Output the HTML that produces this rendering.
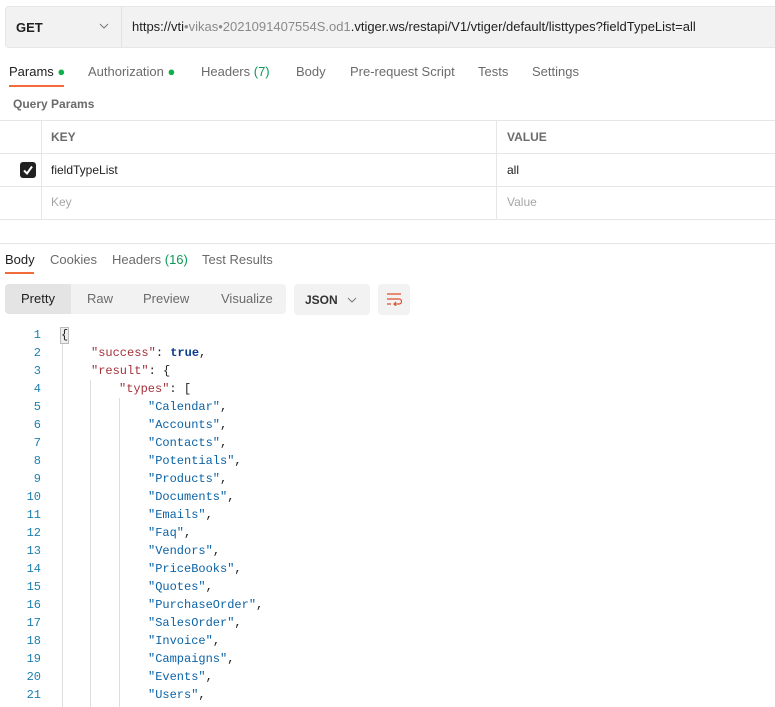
<!DOCTYPE html>
<html><head><style>
body{margin:0;width:775px;height:707px;overflow:hidden;background:#fff;font-family:"Liberation Sans",sans-serif;font-size:13px;color:#212121;position:relative}
.a{position:absolute;white-space:nowrap}
.mono{font-family:"Liberation Mono",monospace;font-size:12px}
.hl{position:absolute;height:1px;background:#e6e6e6}
.vl{position:absolute;width:1px;background:#e6e6e6}
.ln{position:absolute;width:30px;text-align:right;color:#1c7fb0;font-family:"Liberation Mono",monospace;font-size:12px}
.str{color:#0b63a6}
.k{color:#a3323b}
</style></head><body>
<div class="a" style="left:5px;top:6px;width:775px;height:40px;background:#f2f2f2;border:1px solid #e6e6e6;border-radius:4px"></div>
<div class="vl" style="left:121px;top:7px;height:40px;background:#e2e2e2"></div>
<div class="a" style="left:16px;top:20px;font-weight:bold;font-size:13px">GET</div>
<svg class="a" style="left:99px;top:23px" width="10" height="6"><path d="M1 1l4 4 4-4" stroke="#777" fill="none"/></svg>
<div class="a" style="left:132px;top:19px;font-size:13px">https://vti<span style="color:#8a8a8a">•vikas•2021091407554S.od1</span>.vtiger.ws/restapi/V1/vtiger/default/listtypes?fieldTypeList=all</div>

<div class="a" style="left:9px;top:64px">Params <span style="color:#0cb04a">●</span></div>
<div class="a" style="left:9px;top:85px;width:55px;height:2px;background:#f26b3a"></div>
<div class="a" style="left:88px;top:64px;color:#6b6b6b">Authorization <span style="color:#0cb04a">●</span></div>
<div class="a" style="left:201px;top:64px;color:#6b6b6b">Headers <span style="color:#0a9a55">(7)</span></div>
<div class="a" style="left:296px;top:64px;color:#6b6b6b">Body</div>
<div class="a" style="left:350px;top:64px;color:#6b6b6b">Pre-request Script</div>
<div class="a" style="left:478px;top:64px;color:#6b6b6b">Tests</div>
<div class="a" style="left:532px;top:64px;color:#6b6b6b">Settings</div>
<div class="a" style="left:13px;top:97px;font-size:12px;font-weight:bold;color:#6b6b6b">Query Params</div>

<div class="hl" style="left:0;top:120px;width:775px"></div>
<div class="hl" style="left:0;top:153px;width:775px"></div>
<div class="hl" style="left:0;top:186px;width:775px"></div>
<div class="hl" style="left:0;top:219px;width:775px"></div>
<div class="vl" style="left:41px;top:120px;height:100px"></div>
<div class="vl" style="left:496px;top:120px;height:100px"></div>
<div class="a" style="left:51px;top:130px;font-size:12px;font-weight:bold;color:#6b6b6b">KEY</div>
<div class="a" style="left:507px;top:130px;font-size:12px;font-weight:bold;color:#6b6b6b">VALUE</div>
<div class="a" style="left:20px;top:162px;width:16px;height:16px;background:#212121;border-radius:3px"></div>
<svg class="a" style="left:20px;top:162px" width="16" height="16"><path d="M4 8.5l3 3 5-7" stroke="#fff" stroke-width="2" fill="none"/></svg>
<div class="a" style="left:51px;top:163px;font-size:12px">fieldTypeList</div>
<div class="a" style="left:507px;top:163px;font-size:12px">all</div>
<div class="a" style="left:51px;top:195px;font-size:12px;color:#a6a6a6">Key</div>
<div class="a" style="left:507px;top:195px;font-size:12px;color:#a6a6a6">Value</div>
<div class="hl" style="left:0;top:243px;width:775px"></div>

<div class="a" style="left:5px;top:252px">Body</div>
<div class="a" style="left:5px;top:272px;width:29px;height:2px;background:#f26b3a"></div>
<div class="a" style="left:50px;top:252px;color:#6b6b6b">Cookies</div>
<div class="a" style="left:112px;top:252px;color:#6b6b6b">Headers <span style="color:#0a9a55">(16)</span></div>
<div class="a" style="left:202px;top:252px;color:#6b6b6b">Test Results</div>

<div class="a" style="left:5px;top:284px;width:281px;height:30px;background:#f2f2f2;border-radius:4px"></div>
<div class="a" style="left:5px;top:284px;width:66px;height:30px;background:#e4e4e4;border-radius:4px 0 0 4px"></div>
<div class="a" style="left:21px;top:291px">Pretty</div>
<div class="a" style="left:87px;top:291px;color:#6b6b6b">Raw</div>
<div class="a" style="left:143px;top:291px;color:#6b6b6b">Preview</div>
<div class="a" style="left:221px;top:291px;color:#6b6b6b">Visualize</div>
<div class="a" style="left:294px;top:284px;width:76px;height:31px;background:#f2f2f2;border-radius:4px"></div>
<div class="a" style="left:305px;top:293px;font-size:12px;font-weight:bold;color:#333">JSON</div>
<svg class="a" style="left:347px;top:297px" width="10" height="6"><path d="M1 1l4 4 4-4" stroke="#777" fill="none"/></svg>
<div class="a" style="left:378px;top:284px;width:32px;height:31px;background:#f2f2f2;border-radius:4px"></div>
<svg class="a" style="left:386px;top:292px" width="16" height="14"><path d="M1 2h14M1 7h12a2.5 2.5 0 0 1 0 5H8M10 10l-2 2 2 2M1 12h4" stroke="#e0502a" stroke-width="1.2" fill="none"/></svg>

<div class="vl" style="left:62px;top:344px;height:363px;background:#ddd"></div>
<div class="vl" style="left:90px;top:380px;height:327px;background:#ddd"></div>
<div class="vl" style="left:119px;top:398px;height:309px;background:#ddd"></div>
<div class="a" style="left:60px;top:327px;width:7px;height:15px;border:1px solid #bbb;background:#eee"></div>

<div class="ln" style="left:11px;top:328px">1</div>
<div class="a mono" style="left:61px;top:328px">{</div>
<div class="ln" style="left:11px;top:346px">2</div>
<div class="a mono" style="left:91px;top:346px"><span class="k">"success"</span>: <span class="str" style="color:#0a3a8a;font-weight:bold">true</span>,</div>
<div class="ln" style="left:11px;top:364px">3</div>
<div class="a mono" style="left:91px;top:364px"><span class="k">"result"</span>: {</div>
<div class="ln" style="left:11px;top:382px">4</div>
<div class="a mono" style="left:119px;top:382px"><span class="k">"types"</span>: [</div>
<div class="ln" style="left:11px;top:400px">5</div><div class="a mono" style="left:148px;top:400px"><span class="str">"Calendar"</span>,</div>
<div class="ln" style="left:11px;top:418px">6</div><div class="a mono" style="left:148px;top:418px"><span class="str">"Accounts"</span>,</div>
<div class="ln" style="left:11px;top:436px">7</div><div class="a mono" style="left:148px;top:436px"><span class="str">"Contacts"</span>,</div>
<div class="ln" style="left:11px;top:454px">8</div><div class="a mono" style="left:148px;top:454px"><span class="str">"Potentials"</span>,</div>
<div class="ln" style="left:11px;top:472px">9</div><div class="a mono" style="left:148px;top:472px"><span class="str">"Products"</span>,</div>
<div class="ln" style="left:11px;top:490px">10</div><div class="a mono" style="left:148px;top:490px"><span class="str">"Documents"</span>,</div>
<div class="ln" style="left:11px;top:508px">11</div><div class="a mono" style="left:148px;top:508px"><span class="str">"Emails"</span>,</div>
<div class="ln" style="left:11px;top:526px">12</div><div class="a mono" style="left:148px;top:526px"><span class="str">"Faq"</span>,</div>
<div class="ln" style="left:11px;top:544px">13</div><div class="a mono" style="left:148px;top:544px"><span class="str">"Vendors"</span>,</div>
<div class="ln" style="left:11px;top:562px">14</div><div class="a mono" style="left:148px;top:562px"><span class="str">"PriceBooks"</span>,</div>
<div class="ln" style="left:11px;top:580px">15</div><div class="a mono" style="left:148px;top:580px"><span class="str">"Quotes"</span>,</div>
<div class="ln" style="left:11px;top:598px">16</div><div class="a mono" style="left:148px;top:598px"><span class="str">"PurchaseOrder"</span>,</div>
<div class="ln" style="left:11px;top:616px">17</div><div class="a mono" style="left:148px;top:616px"><span class="str">"SalesOrder"</span>,</div>
<div class="ln" style="left:11px;top:634px">18</div><div class="a mono" style="left:148px;top:634px"><span class="str">"Invoice"</span>,</div>
<div class="ln" style="left:11px;top:652px">19</div><div class="a mono" style="left:148px;top:652px"><span class="str">"Campaigns"</span>,</div>
<div class="ln" style="left:11px;top:670px">20</div><div class="a mono" style="left:148px;top:670px"><span class="str">"Events"</span>,</div>
<div class="ln" style="left:11px;top:688px">21</div><div class="a mono" style="left:148px;top:688px"><span class="str">"Users"</span>,</div>
</body></html>
